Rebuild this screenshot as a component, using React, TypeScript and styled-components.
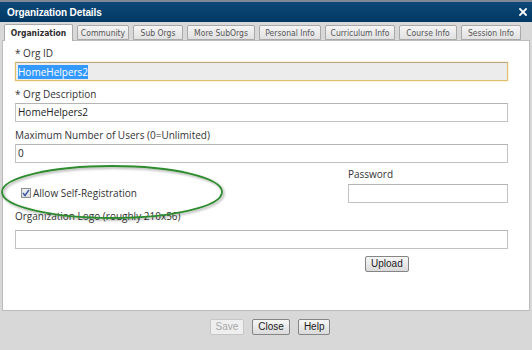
import React from 'react';
import styled, { createGlobalStyle } from 'styled-components';

const GlobalStyle = createGlobalStyle`
  html, body { margin: 0; padding: 0; background: #d8d8d8; }
  body { font-family: "Open Sans", "Liberation Sans", sans-serif; }
  #root { width: 532px; height: 350px; }
`;

const Window = styled.div`
  width: 532px;
  height: 350px;
  display: flex;
  flex-direction: column;
  background: #d8d8d8;
  overflow: hidden;
`;

const TitleBar = styled.div`
  height: 20px;
  border-top: 2px solid #7f8a94;
  background: linear-gradient(#0c4878, #023964);
  display: flex;
  align-items: center;
  justify-content: space-between;
  padding: 0 5px 0 7px;
`;

const Title = styled.span`
  font: bold 10px "Liberation Sans", Arial, sans-serif;
  color: #ffffff;
  letter-spacing: -0.1px;
`;

const CloseX = styled.svg`
  width: 8px;
  height: 8px;
  display: block;
`;

const TabStrip = styled.div`
  height: 18px;
  display: flex;
  align-items: flex-end;
  gap: 4px;
  padding-left: 4px;
  position: relative;
  z-index: 1;
`;

const Tab = styled.div<{ $active?: boolean; $w: number }>`
  width: ${(p) => p.$w}px;
  box-sizing: border-box;
  height: ${(p) => (p.$active ? 17 : 15)}px;
  margin-bottom: ${(p) => (p.$active ? -1 : 0)}px;
  border: 1px solid #a9a9a9;
  border-bottom: ${(p) => (p.$active ? 'none' : '1px solid #a9a9a9')};
  border-radius: 2px 2px 0 0;
  background: ${(p) => (p.$active ? '#ffffff' : 'linear-gradient(#f5f5f5, #e1e1e1)')};
  font: ${(p) => (p.$active ? 'bold' : 'normal')} 8.5px "DejaVu Sans Condensed", "Liberation Sans", Arial, sans-serif;
  color: ${(p) => (p.$active ? '#2e2e2e' : '#555555')};
  display: flex;
  align-items: center;
  justify-content: center;
  white-space: nowrap;
`;

const Panel = styled.div`
  position: relative;
  margin: 0 2px 0 2px;
  height: 271px;
  box-sizing: border-box;
  background: #ffffff;
  border: 1px solid #bcbcbc;
  padding: 5px 21px 0 12px;
  display: flex;
  flex-direction: column;
`;

const Field = styled.div<{ $mt?: number }>`
  display: flex;
  flex-direction: column;
  margin-top: ${(p) => p.$mt ?? 0}px;
`;

const Label = styled.div<{ $mb?: number }>`
  height: 16px;
  line-height: 15px;
  margin-bottom: ${(p) => p.$mb ?? 0}px;
  font-size: 10px;
  color: #333333;
  white-space: nowrap;
`;

const TextBox = styled.div<{ $focused?: boolean }>`
  height: 19px;
  box-sizing: border-box;
  border: 1px solid ${(p) => (p.$focused ? '#e2bf6c' : '#c2c2c2')};
  border-top-color: ${(p) => (p.$focused ? '#b9a680' : '#b5b5b5')};
  box-shadow: ${(p) => (p.$focused ? '0 0 2px #f3d896' : 'none')};
  background: ${(p) => (p.$focused ? '#ececec' : '#ffffff')};
  padding: 0 2px;
  font-size: 10px;
  line-height: 17px;
  color: #222222;
  display: flex;
  align-items: center;
`;

const Selected = styled.span`
  background: #3399ff;
  color: #ffffff;
  line-height: 14px;
`;

const Row = styled.div`
  display: flex;
  align-items: flex-end;
  margin-top: 4px;
`;

const CheckCol = styled.label`
  flex: 1;
  height: 19px;
  display: flex;
  align-items: center;
  gap: 2px;
  padding-left: 6px;
  padding-bottom: 2px;
  box-sizing: border-box;
  font-size: 10px;
  color: #333333;
`;

const CheckBox = styled.span`
  width: 10px;
  height: 10px;
  box-sizing: border-box;
  border: 1px solid #8e8f8f;
  background: linear-gradient(#f0f0f0, #dcdcdc);
  display: flex;
  align-items: center;
  justify-content: center;
`;

const PasswordCol = styled.div`
  width: 160px;
  display: flex;
  flex-direction: column;
`;

const UploadRow = styled.div`
  display: flex;
  padding-left: 350px;
  margin-top: 7px;
`;

const Button = styled.button<{ $disabled?: boolean }>`
  height: 16px;
  box-sizing: border-box;
  padding: 0 5px;
  margin: 0;
  border: 1px solid ${(p) => (p.$disabled ? '#c6c6c6' : '#858585')};
  border-radius: 2px;
  background: ${(p) => (p.$disabled ? '#efefef' : 'linear-gradient(#f8f8f8, #dadada)')};
  font: 10px "Liberation Sans", Arial, sans-serif;
  color: ${(p) => (p.$disabled ? '#a8a8a8' : '#1a1a1a')};
  line-height: 14px;
  cursor: default;
`;

const Footer = styled.div`
  display: flex;
  justify-content: center;
  gap: 8px;
  padding: 8px 0 0 8px;
`;

const Annotation = styled.svg`
  position: absolute;
  left: -4px;
  top: 120px;
  width: 232px;
  height: 66px;
  overflow: visible;
  pointer-events: none;
`;

const tabs: { name: string; w: number }[] = [
  { name: 'Organization', w: 69 },
  { name: 'Community', w: 52 },
  { name: 'Sub Orgs', w: 50 },
  { name: 'More SubOrgs', w: 68 },
  { name: 'Personal Info', w: 62 },
  { name: 'Curriculum Info', w: 70 },
  { name: 'Course Info', w: 58 },
  { name: 'Session Info', w: 60 },
];

export default function App() {
  return (
    <>
      <GlobalStyle />
      <Window>
        <TitleBar>
          <Title>Organization Details</Title>
          <CloseX viewBox="0 0 8 8">
            <path d="M1 1 L7 7 M7 1 L1 7" stroke="#ffffff" strokeWidth="1.8" strokeLinecap="square" />
          </CloseX>
        </TitleBar>
        <TabStrip>
          {tabs.map((t, i) => (
            <Tab key={t.name} $w={t.w} $active={i === 0}>
              {t.name}
            </Tab>
          ))}
        </TabStrip>
        <Panel>
          <Field>
            <Label>* Org ID</Label>
            <TextBox $focused>
              <Selected>HomeHelpers2</Selected>
            </TextBox>
          </Field>
          <Field $mt={6}>
            <Label>* Org Description</Label>
            <TextBox>HomeHelpers2</TextBox>
          </Field>
          <Field $mt={6}>
            <Label>Maximum Number of Users (0=Unlimited)</Label>
            <TextBox>0</TextBox>
          </Field>
          <Row>
            <CheckCol>
              <CheckBox>
                <svg width="8" height="8" viewBox="0 0 8 8">
                  <path d="M1 4 L3 6.5 L7 0.8" fill="none" stroke="#3b56a8" strokeWidth="1.4" />
                </svg>
              </CheckBox>
              Allow Self-Registration
            </CheckCol>
            <PasswordCol>
              <Label $mb={1}>Password</Label>
              <TextBox />
            </PasswordCol>
          </Row>
          <Field $mt={6}>
            <Label $mb={5}>Organization Logo (roughly 210x56)</Label>
            <TextBox />
          </Field>
          <UploadRow>
            <Button>Upload</Button>
          </UploadRow>
          <Annotation width="232" height="66" viewBox="0 0 232 66">
            <defs>
              <filter id="sh" filterUnits="userSpaceOnUse" x="-10" y="-10" width="260" height="90">
                <feDropShadow dx="1.5" dy="1.5" stdDeviation="1.2" floodColor="#000" floodOpacity="0.35" />
              </filter>
            </defs>
            <ellipse cx="113" cy="31" rx="110" ry="26" fill="none" stroke="#2f8c2f" strokeWidth="1.8" filter="url(#sh)" />
          </Annotation>
        </Panel>
        <Footer>
          <Button $disabled>Save</Button>
          <Button>Close</Button>
          <Button>Help</Button>
        </Footer>
      </Window>
    </>
  );
}
